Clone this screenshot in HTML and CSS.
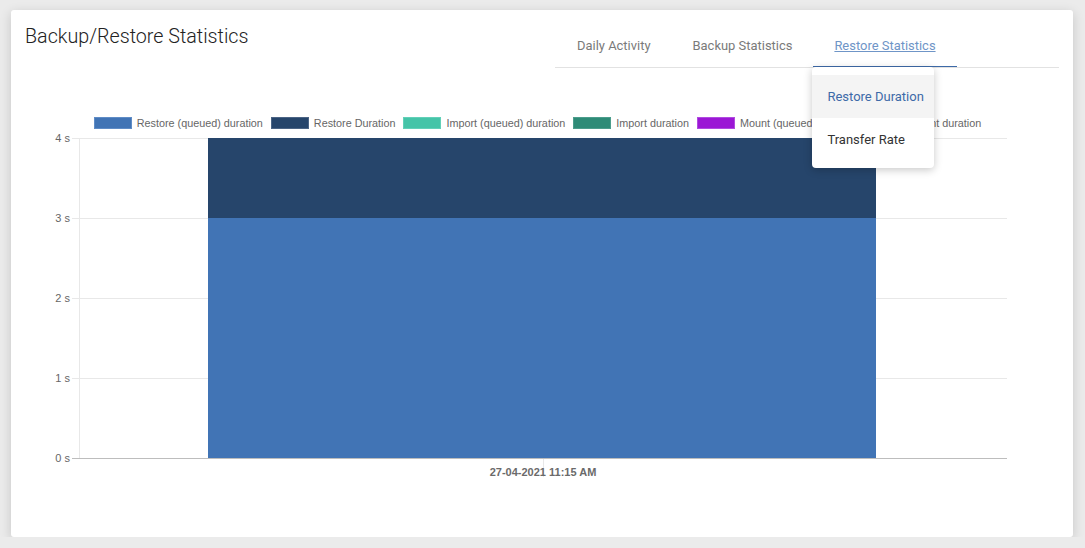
FILE: index.html
```html
<!DOCTYPE html>
<html lang="en">
<head>
<meta charset="utf-8">
<title>Backup/Restore Statistics</title>
<link rel="stylesheet" href="styles.css">
</head>
<body>
<div class="card">
  <div class="card-header">
    <h1 class="title">Backup/Restore Statistics</h1>
    <nav class="tabs">
      <div class="tab">Daily Activity</div>
      <div class="tab">Backup Statistics</div>
      <div class="tab tab-active">
        <span class="tab-link">Restore Statistics</span>
        <div class="dropdown">
          <div class="dropdown-item dropdown-item-active">Restore Duration</div>
          <div class="dropdown-item">Transfer Rate</div>
        </div>
      </div>
    </nav>
  </div>
  <div class="chart">
    <div class="legend">
      <div class="legend-item"><span class="swatch sw-rq"></span>Restore (queued) duration</div>
      <div class="legend-item"><span class="swatch sw-rd"></span>Restore Duration</div>
      <div class="legend-item"><span class="swatch sw-iq"></span>Import (queued) duration</div>
      <div class="legend-item"><span class="swatch sw-id"></span>Import duration</div>
      <div class="legend-item"><span class="swatch sw-mq"></span>Mount (queued) duration</div>
      <div class="legend-item"><span class="swatch sw-md"></span>Mount duration</div>
    </div>
    <svg class="plot" width="1062" height="360" viewBox="0 0 1062 360">
      <g class="grid">
        <line x1="61" y1="9.5" x2="996" y2="9.5"/>
        <line x1="61" y1="89.5" x2="996" y2="89.5"/>
        <line x1="61" y1="169.5" x2="996" y2="169.5"/>
        <line x1="61" y1="249.5" x2="996" y2="249.5"/>
        <line x1="68.5" y1="9" x2="68.5" y2="329"/>
        <line x1="532.5" y1="329" x2="532.5" y2="348"/>
      </g>
      <rect x="197" y="9" width="668" height="80" fill="#26456b"/>
      <rect x="197" y="89" width="668" height="240" fill="#4174b5"/>
      <line class="axis" x1="61" y1="329.5" x2="996" y2="329.5"/>
      <g class="ylabels">
        <text x="59" y="13">4 s</text>
        <text x="59" y="93">3 s</text>
        <text x="59" y="173">2 s</text>
        <text x="59" y="253">1 s</text>
        <text x="59" y="333">0 s</text>
      </g>
      <text class="xlabel" x="532" y="347">27-04-2021 11:15 AM</text>
    </svg>
  </div>
</div>
</body>
</html>
```
FILE: styles.css
```css
* { box-sizing: border-box; }

body {
  margin: 0;
  background: #ebebeb;
  font-family: Roboto, "Liberation Sans", Arial, sans-serif;
}

.card {
  margin: 10px 12px 0 11px;
  height: 527px;
  background: #fff;
  border-radius: 3px;
  box-shadow: 0 3px 12px rgba(0, 0, 0, 0.16);
}

.card-header {
  display: flex;
  justify-content: space-between;
  align-items: flex-start;
  padding: 15px 14px 0 14px;
}

.title {
  margin: 0;
  font-size: 19.7px;
  line-height: 24px;
  font-weight: 300;
  color: #222;
}

.tabs {
  display: flex;
  width: 504px;
  padding-left: 1px;
  border-bottom: 1px solid #e2e2e2;
}

.tab {
  position: relative;
  height: 42px;
  padding: 0 21px;
  display: flex;
  align-items: center;
  font-size: 12.95px;
  color: #7a7a7a;
  border-bottom: 1px solid transparent;
}

.tab-active {
  border-bottom-color: #3d6aa8;
}

.tab-link {
  color: #6f95c7;
  text-decoration: underline;
}

.dropdown {
  position: absolute;
  left: -1px;
  top: calc(100% + 1px);
  width: 122px;
  padding: 8px 0 7px;
  background: #fff;
  border-radius: 4px;
  box-shadow: 0 2px 8px rgba(0, 0, 0, 0.22);
  z-index: 5;
}

.dropdown-item {
  height: 43px;
  padding: 0 15px;
  display: flex;
  align-items: center;
  font-size: 13px;
  color: #333;
  white-space: nowrap;
}

.dropdown-item-active {
  background: #f4f4f4;
  color: #3d6aa8;
}

.chart {
  font-family: "Liberation Sans", Arial, sans-serif;
}

.legend {
  display: flex;
  justify-content: center;
  gap: 8px;
  margin-top: 49px;
  padding-right: 9px;
  height: 12px;
}

.legend-item {
  display: flex;
  align-items: center;
  font-size: 10.8px;
  line-height: 12px;
  color: #666;
  white-space: nowrap;
}

.swatch {
  width: 38px;
  height: 12px;
  margin-right: 5px;
  border: 1px solid;
}

.sw-rq { background: #4174b5; border-color: #5f8cc6; }
.sw-rd { background: #26456b; border-color: #4b6485; }
.sw-iq { background: #45c4a8; border-color: #62d0b8; }
.sw-id { background: #2e8b77; border-color: #4c9d8c; }
.sw-mq { background: #9b17d5; border-color: #b04be0; }
.sw-md { background: #7a5a2a; border-color: #8c7048; }

.plot {
  display: block;
}

.grid line {
  stroke: #e8e8e8;
  stroke-width: 1;
}

.axis {
  stroke: #bdbdbd;
  stroke-width: 1;
}

.ylabels text {
  font-size: 11px;
  fill: #666;
  text-anchor: end;
}

.xlabel {
  font-size: 11px;
  font-weight: 700;
  fill: #6a6a6a;
  text-anchor: middle;
}
```
